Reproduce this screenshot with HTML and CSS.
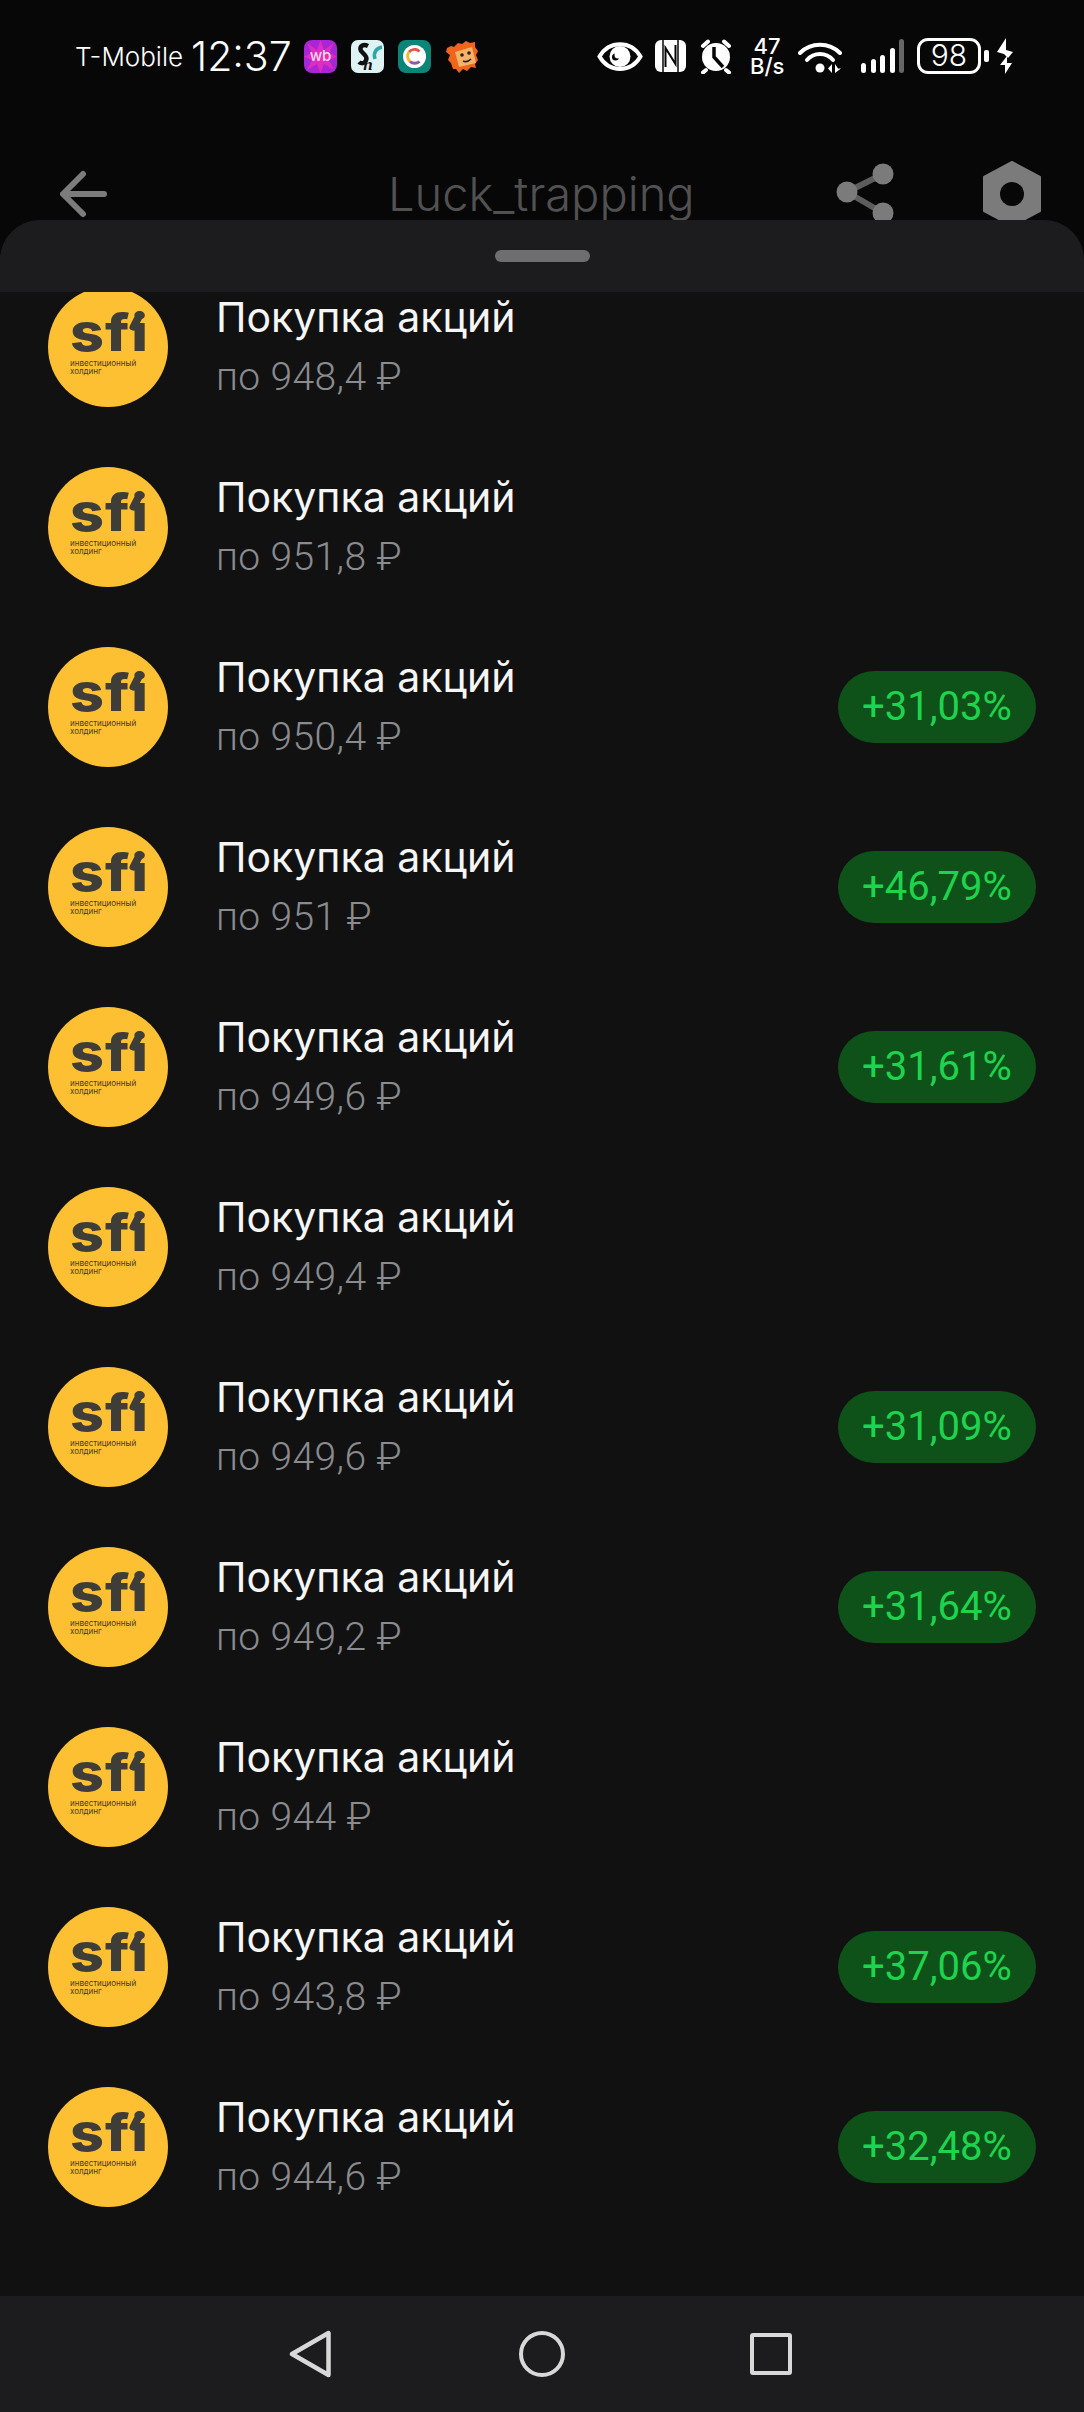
FILE: index.html
```html
<!DOCTYPE html>
<html lang="ru">
<head>
    <meta charset="UTF-8">
    <meta name="viewport" content="width=device-width, initial-scale=1.0">
    <title>Luck_trapping</title>
    <link rel="stylesheet" href="styles.css">
</head>
<body>
    <div class="status-bar">
        <span class="carrier">T-Mobile</span>
        <span class="time">12:37</span>
        <div class="app-icons">
            <svg class="app-icon" viewBox="0 0 33 33">
                <rect width="33" height="33" rx="8" fill="#a826d6"/>
                <path d="M16.500 0 L20 10 L30 3 L25 13 L33 16.500 L25 20 L30 30 L20 24 L16.500 33 L13 24 L3 30 L8 20 L0 16.500 L8 13 L3 3 L13 10 Z" fill="#e02cc0"/>
                <text x="16.500" y="21" class="wb-text">wb</text>
            </svg>
            <svg class="app-icon" viewBox="0 0 33 33">
                <rect width="33" height="33" rx="7" fill="#dff3f5"/>
                <path d="M17 6 C11 3 7 8 11 12 C15 16 17 18 14 22 C12 24 9 23 8 22" fill="none" stroke="#111" stroke-width="4.500"/>
                <path d="M31 7 C25 8 22 13 24 19" fill="none" stroke="#2aa9a8" stroke-width="3.500"/>
                <text x="17" y="30" class="sh-text">h</text>
            </svg>
            <svg class="app-icon" viewBox="0 0 33 33">
                <rect width="33" height="33" rx="8" fill="#0b8577"/>
                <circle cx="16.500" cy="16.500" r="11.500" fill="#fff"/>
                <path d="M21.500 11.500 A7 7 0 0 0 11 12" fill="none" stroke="#e2574c" stroke-width="3"/>
                <path d="M11 12 A7 7 0 0 0 12 21.500" fill="none" stroke="#f0b93a" stroke-width="3"/>
                <path d="M12 21.500 A7 7 0 0 0 21.500 21.500" fill="none" stroke="#8d5aa8" stroke-width="3"/>
            </svg>
            <svg class="app-icon" viewBox="0 0 33 33">
                <path d="M2 8 L6 6 L9 7 L13 3 L17 4 L21 1 L25 3 L30 2 L30 7 L33 11 L31 15 L33 20 L30 24 L31 28 L26 27 L22 31 L18 29 L14 33 L11 29 L8 29 L6 23 L3 20 L5 15 L1 12 Z" fill="#f0651d"/>
                <path d="M10 12 L27 7 L31 23 L14 27 Z" fill="#f7b267"/>
                <circle cx="17" cy="15" r="1.800" fill="#222"/>
                <circle cx="24" cy="13" r="1.800" fill="#222"/>
                <path d="M18 21 Q22 23 26 19" fill="none" stroke="#222" stroke-width="1.600"/>
            </svg>
        </div>
        <div class="status-right">
            <svg class="eye" viewBox="0 0 46 31">
                <path d="M2.500 15.500 C12 -1 34 -1 43.500 15.500 C34 32 12 32 2.500 15.500 Z" fill="none" stroke="#fff" stroke-width="4"/>
                <circle cx="23" cy="15.500" r="10.500" fill="#fff"/>
                <circle cx="18.500" cy="16" r="3.500" fill="#070708"/>
                <circle cx="21" cy="14" r="3.500" fill="#fff"/>
            </svg>
            <svg class="nfc" viewBox="0 0 31 32">
                <rect y="0" width="31" height="32" rx="6" fill="#fff"/>
                <path d="M8 0 V32 M23 0 V32" stroke="#070708" stroke-width="1.500"/>
                <path d="M10.500 27 V8 L20.500 24 V5" fill="none" stroke="#070708" stroke-width="2"/>
            </svg>
            <svg class="alarm" viewBox="0 0 36 35">
                <circle cx="18" cy="18" r="14" fill="#fff"/>
                <path d="M5 7 L10 2.500 M31 7 L26 2.500 M8 31 L5 33.500 M28 31 L31 33.500" stroke="#fff" stroke-width="4" stroke-linecap="round"/>
                <path d="M16 8 V18 L25 28" fill="none" stroke="#070708" stroke-width="3.500"/>
            </svg>
            <div class="net-speed">47<br>B/s</div>
            <svg class="wifi" viewBox="0 0 44 35">
                <path d="M2 14 C13 3 31 3 42 14" fill="none" stroke="#fff" stroke-width="4" stroke-linecap="round"/>
                <path d="M9 21 C16 13 28 13 35 21" fill="none" stroke="#fff" stroke-width="4" stroke-linecap="round"/>
                <circle cx="22" cy="29" r="4.500" fill="#fff"/>
                <path d="M34 25 V34 L30 29.500 Z M37 25 V34 L43 29.500 L40 29.500 Z" fill="#fff"/>
            </svg>
            <div class="signal">
                <span class="bar bar-1"></span>
                <span class="bar bar-2"></span>
                <span class="bar bar-3"></span>
                <span class="bar bar-4"></span>
                <span class="bar bar-5"></span>
            </div>
            <div class="battery">
                <div class="battery-body">98</div>
                <span class="battery-tip"></span>
            </div>
            <svg class="bolt" viewBox="0 0 16 36">
                <path d="M9 0 L0 14 L7 16 L11 20 L16 14 L9 12 Z" fill="#fff"/>
                <path d="M10 18 L3 27 H8 L8 36 L15 25 H10 Z" fill="#fff"/>
            </svg>
        </div>
    </div>

    <div class="app-bar">
        <svg class="back" viewBox="0 0 47 68">
            <path d="M4 23 H44 M23 3 L3 23 L23 43" transform="translate(0 11)" fill="none" stroke="#7c7c7c" stroke-width="6" stroke-linecap="round" stroke-linejoin="round"/>
        </svg>
        <div class="app-title">Luck_trapping</div>
        <svg class="share" viewBox="0 0 60 68">
            <path d="M11 32 L47 14 M11 32 L47 53" stroke="#5d5d5d" stroke-width="6"/>
            <circle cx="11" cy="32" r="10.500" fill="#7b7b7b"/>
            <circle cx="47" cy="14" r="10.500" fill="#7b7b7b"/>
            <circle cx="47" cy="53" r="10.500" fill="#7b7b7b"/>
        </svg>
        <svg class="settings" viewBox="0 0 58 68">
            <path d="M29 2 L57 17 V51 L29 66 L1 51 V17 Z" fill="#7b7b7b" stroke="#7b7b7b" stroke-width="2" stroke-linejoin="round"/>
            <circle cx="29" cy="34" r="12" fill="#070708"/>
        </svg>
    </div>

    <div class="sheet">
        <div class="sheet-head"><span class="handle"></span></div>
        <div class="list">
            <div class="row">
                <div class="avatar"><span class="avatar-mark">sfi</span><span class="avatar-cap">инвестиционный<br>холдинг</span></div>
                <div class="row-text"><div class="row-title">Покупка акций</div><div class="row-sub">по 948,4 ₽</div></div>
            </div>
            <div class="row">
                <div class="avatar"><span class="avatar-mark">sfi</span><span class="avatar-cap">инвестиционный<br>холдинг</span></div>
                <div class="row-text"><div class="row-title">Покупка акций</div><div class="row-sub">по 951,8 ₽</div></div>
            </div>
            <div class="row">
                <div class="avatar"><span class="avatar-mark">sfi</span><span class="avatar-cap">инвестиционный<br>холдинг</span></div>
                <div class="row-text"><div class="row-title">Покупка акций</div><div class="row-sub">по 950,4 ₽</div></div>
                <div class="chip">+31,03%</div>
            </div>
            <div class="row">
                <div class="avatar"><span class="avatar-mark">sfi</span><span class="avatar-cap">инвестиционный<br>холдинг</span></div>
                <div class="row-text"><div class="row-title">Покупка акций</div><div class="row-sub">по 951 ₽</div></div>
                <div class="chip">+46,79%</div>
            </div>
            <div class="row">
                <div class="avatar"><span class="avatar-mark">sfi</span><span class="avatar-cap">инвестиционный<br>холдинг</span></div>
                <div class="row-text"><div class="row-title">Покупка акций</div><div class="row-sub">по 949,6 ₽</div></div>
                <div class="chip">+31,61%</div>
            </div>
            <div class="row">
                <div class="avatar"><span class="avatar-mark">sfi</span><span class="avatar-cap">инвестиционный<br>холдинг</span></div>
                <div class="row-text"><div class="row-title">Покупка акций</div><div class="row-sub">по 949,4 ₽</div></div>
            </div>
            <div class="row">
                <div class="avatar"><span class="avatar-mark">sfi</span><span class="avatar-cap">инвестиционный<br>холдинг</span></div>
                <div class="row-text"><div class="row-title">Покупка акций</div><div class="row-sub">по 949,6 ₽</div></div>
                <div class="chip">+31,09%</div>
            </div>
            <div class="row">
                <div class="avatar"><span class="avatar-mark">sfi</span><span class="avatar-cap">инвестиционный<br>холдинг</span></div>
                <div class="row-text"><div class="row-title">Покупка акций</div><div class="row-sub">по 949,2 ₽</div></div>
                <div class="chip">+31,64%</div>
            </div>
            <div class="row">
                <div class="avatar"><span class="avatar-mark">sfi</span><span class="avatar-cap">инвестиционный<br>холдинг</span></div>
                <div class="row-text"><div class="row-title">Покупка акций</div><div class="row-sub">по 944 ₽</div></div>
            </div>
            <div class="row">
                <div class="avatar"><span class="avatar-mark">sfi</span><span class="avatar-cap">инвестиционный<br>холдинг</span></div>
                <div class="row-text"><div class="row-title">Покупка акций</div><div class="row-sub">по 943,8 ₽</div></div>
                <div class="chip">+37,06%</div>
            </div>
            <div class="row">
                <div class="avatar"><span class="avatar-mark">sfi</span><span class="avatar-cap">инвестиционный<br>холдинг</span></div>
                <div class="row-text"><div class="row-title">Покупка акций</div><div class="row-sub">по 944,6 ₽</div></div>
                <div class="chip">+32,48%</div>
            </div>
        </div>
        <div class="nav-bar">
            <svg class="nav-back" viewBox="0 0 44 48">
                <path d="M39.500 3 V45 L3 24 Z" fill="none" stroke="#d8d8d8" stroke-width="4.500" stroke-linejoin="round"/>
            </svg>
            <span class="nav-home"></span>
            <span class="nav-recent"></span>
        </div>
    </div>
</body>
</html>
```

FILE: styles.css
```css
* {
    box-sizing: border-box;
}

body {
    font-family: Inter, "Noto Sans", sans-serif;
    background-color: #070708;
    color: #ffffff;
    margin: 0;
    padding: 0;
    width: 1084px;
    height: 2412px;
    display: flex;
    flex-direction: column;
    overflow: hidden;
}

/* status bar */
.status-bar {
    height: 110px;
    padding: 2px 71px 0 75px;
    display: flex;
    align-items: center;
}

.carrier {
    width: 116px;
    font-size: 26px;
    font-weight: 300;
    white-space: nowrap;
}

.time {
    width: 113px;
    font-size: 41px;
    font-weight: 300;
    white-space: nowrap;
}

.app-icons {
    display: flex;
    gap: 14px;
}

.app-icon {
    width: 33px;
    height: 33px;
    display: block;
}

.wb-text {
    font-family: Inter, sans-serif;
    font-size: 15px;
    font-weight: 500;
    fill: #ffd9ee;
    text-anchor: middle;
}

.sh-text {
    font-family: "Liberation Serif", serif;
    font-size: 17px;
    font-style: italic;
    font-weight: 700;
    fill: #111111;
    text-anchor: middle;
}

.status-right {
    margin-left: auto;
    display: flex;
    align-items: center;
}

.eye {
    width: 46px;
    height: 31px;
}

.nfc {
    width: 31px;
    height: 32px;
    margin-left: 12px;
}

.alarm {
    width: 36px;
    height: 35px;
    margin-left: 12px;
}

.net-speed {
    width: 34px;
    margin-left: 16px;
    font-size: 22px;
    font-weight: 500;
    line-height: 20px;
    text-align: center;
}

.wifi {
    width: 44px;
    height: 35px;
    margin-left: 14px;
}

.signal {
    width: 43px;
    height: 34px;
    margin-left: 19px;
    display: flex;
    align-items: flex-end;
    justify-content: space-between;
}

.bar {
    width: 5px;
    background-color: #ffffff;
    border-radius: 3px;
}

.bar-1 { height: 10px; }
.bar-2 { height: 14px; }
.bar-3 { height: 18px; }
.bar-4 { height: 25px; }
.bar-5 { height: 34px; background-color: #666666; }

.battery {
    margin-left: 13px;
    display: flex;
    align-items: center;
    gap: 3px;
}

.battery-body {
    width: 64px;
    height: 36px;
    border: 3.5px solid #ffffff;
    border-radius: 11px;
    font-size: 30px;
    font-weight: 300;
    line-height: 29px;
    text-align: center;
}

.battery-tip {
    width: 5px;
    height: 12px;
    background-color: #ffffff;
    border-radius: 2px;
}

.bolt {
    width: 16px;
    height: 36px;
    margin-left: 8px;
}

/* app bar behind the sheet */
.app-bar {
    height: 110px;
    padding: 50px 43px 0 60px;
    display: flex;
    align-items: flex-start;
    overflow: hidden;
}

.back {
    width: 47px;
    height: 68px;
    flex: none;
}

.app-title {
    margin-left: 281px;
    font-size: 47px;
    font-weight: 300;
    line-height: 68px;
    color: #515152;
    white-space: nowrap;
}

.share {
    width: 60px;
    height: 68px;
    margin-left: auto;
    flex: none;
}

.settings {
    width: 58px;
    height: 68px;
    margin-left: 87px;
    flex: none;
}

/* bottom sheet */
.sheet {
    flex: 1;
    min-height: 0;
    display: flex;
    flex-direction: column;
    background-color: #111112;
    border-radius: 40px 40px 0 0;
    overflow: hidden;
}

.sheet-head {
    height: 72px;
    flex: none;
    padding-top: 30px;
    background-color: #1c1c1e;
    display: flex;
    justify-content: center;
    align-items: flex-start;
}

.handle {
    width: 95px;
    height: 12px;
    background-color: #6e6e70;
    border-radius: 6px;
}

.list {
    flex: 1;
    min-height: 0;
    overflow: hidden;
}

.row {
    height: 180px;
    padding: 0 48px;
    display: flex;
    align-items: center;
}

.row:first-child {
    margin-top: -35px;
}

.avatar {
    width: 120px;
    height: 120px;
    flex: none;
    padding: 20px 0 0 22px;
    background-color: #fdc032;
    border-radius: 50%;
    color: #3f3d38;
    display: flex;
    flex-direction: column;
    overflow: hidden;
}

.avatar-mark {
    position: relative;
    font-size: 52px;
    font-weight: 800;
    line-height: 52px;
    letter-spacing: 1px;
    transform: scaleX(1.14);
    transform-origin: left;
}

/* the tail that joins the dot of the i to its stem */
.avatar-mark::after {
    content: "";
    position: absolute;
    left: 54px;
    top: 8px;
    width: 7px;
    height: 16px;
    background-color: #3f3d38;
    border-radius: 4px;
    transform: rotate(24deg);
}

.avatar-cap {
    font-size: 8px;
    font-weight: 400;
    line-height: 8px;
    white-space: nowrap;
}

.row-text {
    margin-left: 48px;
}

.row-title {
    font-size: 41px;
    line-height: 60px;
    color: #f6f6f6;
    white-space: nowrap;
}

.row-sub {
    font-family: Roboto, sans-serif;
    font-size: 39px;
    font-weight: 300;
    letter-spacing: 0.4px;
    line-height: 60px;
    color: #8a8b8f;
    white-space: nowrap;
}

.chip {
    margin-left: auto;
    width: 198px;
    height: 72px;
    background-color: #0e5219;
    border-radius: 36px;
    color: #1ed44f;
    font-family: Roboto, sans-serif;
    font-size: 40px;
    line-height: 72px;
    text-align: center;
}

/* system navigation */
.nav-bar {
    height: 116px;
    flex: none;
    background-color: #1c1c1e;
    display: flex;
    align-items: center;
}

.nav-back {
    width: 44px;
    height: 48px;
    margin-left: 289px;
}

.nav-home {
    width: 46px;
    height: 46px;
    margin-left: 186px;
    border: 4.5px solid #d8d8d8;
    border-radius: 50%;
}

.nav-recent {
    width: 42px;
    height: 42px;
    margin-left: 185px;
    border: 4.5px solid #d8d8d8;
    border-radius: 3px;
}
```
